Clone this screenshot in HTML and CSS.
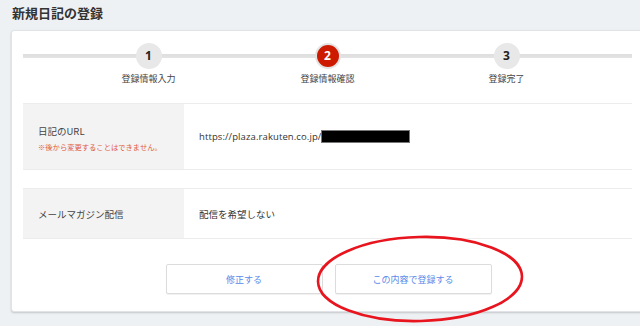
FILE: index.html
```html
<!DOCTYPE html>
<html lang="ja">
<head>
<meta charset="utf-8">
<link rel="stylesheet" href="styles.css">
</head>
<body>
<div class="page">
  <h1 class="title">新規日記の登録</h1>
  <div class="card">
    <div class="steps">
      <div class="step">
        <div class="num">1</div>
        <div class="label">登録情報入力</div>
      </div>
      <div class="step">
        <div class="num active">2</div>
        <div class="label">登録情報確認</div>
      </div>
      <div class="step">
        <div class="num">3</div>
        <div class="label">登録完了</div>
      </div>
    </div>
    <div class="row row-url">
      <div class="th">
        <div class="th-main">日記のURL</div>
        <div class="note">※後から変更することはできません。</div>
      </div>
      <div class="td"><span class="url">https://plaza.rakuten.co.jp/</span><span class="redact"></span></div>
    </div>
    <div class="row row-mail">
      <div class="th"><div class="th-main">メールマガジン配信</div></div>
      <div class="td">配信を希望しない</div>
    </div>
    <div class="buttons">
      <button class="btn">修正する</button>
      <button class="btn">この内容で登録する</button>
    </div>
  </div>
  <svg class="circle-mark" width="214" height="92" viewBox="0 0 214 92">
    <ellipse cx="106" cy="46" rx="102" ry="42" fill="none" stroke="#e8141e" stroke-width="2.6" transform="rotate(-1.5 106 46)"/>
  </svg>
</div>
</body>
</html>
```
FILE: styles.css
```css
* { box-sizing: border-box; }
html, body { margin: 0; padding: 0; }
body {
  width: 640px;
  height: 326px;
  overflow: hidden;
  background: #eef1f4;
  font-family: "Open Sans", "Noto Sans CJK JP", sans-serif;
  color: #333;
}
.page {
  position: relative;
  padding: 4px 0 0 11px;
}
.title {
  margin: 0 0 0 1px;
  font-family: "Noto Sans CJK JP", sans-serif;
  font-size: 13px;
  font-weight: bold;
  line-height: 18px;
  height: 26px;
  color: #333;
}
.card {
  width: 640px;
  background: #fff;
  border: 1px solid #e1e3e6;
  border-radius: 3px;
  box-shadow: 0 1px 2px rgba(0,0,0,0.18);
  padding: 12px 18px 17px 11px;
  height: 282px;
}
.steps {
  display: grid;
  grid-template-columns: 179px 179px 179px;
  justify-content: center;
  width: 609px;
  background: linear-gradient(#fff 0, #fff 11px, #dedede 11px, #e4e4e4 15px, #fff 15px) no-repeat;
  background-size: 100% 26px;
  border-radius: 2px;
}
.step {
  display: flex;
  flex-direction: column;
  align-items: center;
}
.num {
  width: 26px;
  height: 26px;
  border-radius: 50%;
  background: #e8e8e8;
  color: #222;
  font-family: "Open Sans", sans-serif;
  font-weight: bold;
  font-size: 12px;
  line-height: 26px;
  text-align: center;
}
.num.active {
  background: #cc1b00;
  color: #fff;
  border: 2px solid #e4e4e4;
  line-height: 22px;
}
.label {
  margin-top: 3px;
  font-family: "Noto Sans CJK JP", sans-serif;
  font-size: 9px;
  line-height: 14px;
  color: #444;
}
.row {
  display: flex;
  width: 609px;
  border-top: 1px solid #ececec;
  border-bottom: 1px solid #ececec;
}
.row-url { margin-top: 17px; height: 67px; }
.row-mail { margin-top: 18px; height: 51px; }
.th {
  width: 161px;
  background: #f3f3f3;
  padding-left: 15px;
  display: flex;
  flex-direction: column;
  justify-content: center;
}
.th-main {
  font-family: "Noto Sans CJK JP", sans-serif;
  font-size: 9.5px;
  line-height: 14px;
  color: #444;
}
.row-url .th { padding-top: 3px; }
.note {
  margin-top: 4px;
  font-family: "Noto Sans CJK JP", sans-serif;
  font-size: 7.3px;
  line-height: 10px;
  color: #e05a3a;
}
.td {
  flex: 1;
  display: flex;
  align-items: center;
  padding-left: 15px;
  font-family: "Noto Sans CJK JP", sans-serif;
  font-size: 9.5px;
  color: #333;
}
.url {
  font-family: "Open Sans", sans-serif;
  font-size: 9.5px;
  letter-spacing: 0.1px;
}
.redact {
  display: inline-block;
  width: 89px;
  height: 13px;
  background: #000;
  border: 1px solid #777;
}
.buttons {
  display: flex;
  justify-content: center;
  gap: 12px;
  margin-top: 25px;
  width: 609px;
  padding-left: 2px;
}
.btn {
  width: 157px;
  height: 30px;
  background: #fff;
  border: 1px solid #dcdcdc;
  border-radius: 2px;
  box-shadow: 0 1px 1px rgba(0,0,0,0.06);
  color: #5a8bea;
  font-family: "Noto Sans CJK JP", sans-serif;
  font-size: 9px;
  padding: 0;
}
.circle-mark {
  position: absolute;
  left: 314px;
  top: 233px;
}
```
